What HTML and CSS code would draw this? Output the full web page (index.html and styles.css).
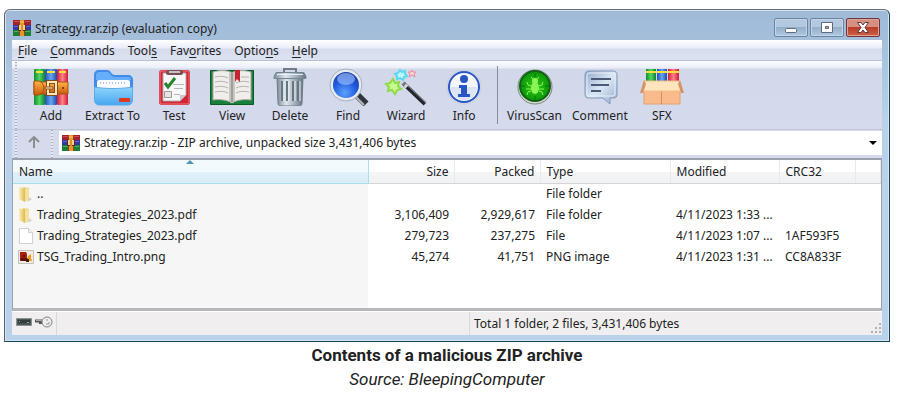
FILE: index.html
```html
<!DOCTYPE html>
<html lang="en">
<head>
	<meta charset="UTF-8">
	<title>Strategy.rar.zip</title>
	<link rel="stylesheet" href="styles.css">
</head>
<body>
	<svg class="defs" width="0" height="0" aria-hidden="true">
		<defs>
			<linearGradient id="gfolder" x1="0" y1="0" x2="0" y2="1"><stop offset="0" stop-color="#8fd6fb"/><stop offset="1" stop-color="#47a5f0"/></linearGradient>
			<linearGradient id="gyellow" x1="0" y1="0" x2="1" y2="0"><stop offset="0" stop-color="#fbf0b8"/><stop offset="1" stop-color="#dfb94c"/></linearGradient>
			<linearGradient id="gmetal" x1="0" y1="0" x2="1" y2="0"><stop offset="0" stop-color="#7d8b98"/><stop offset=".35" stop-color="#dde5eb"/><stop offset=".65" stop-color="#aab7c3"/><stop offset="1" stop-color="#66747f"/></linearGradient>
			<radialGradient id="gblue" cx=".45" cy=".8" r=".8"><stop offset="0" stop-color="#5ba3ff"/><stop offset=".6" stop-color="#1f57dc"/><stop offset="1" stop-color="#1a3ba5"/></radialGradient>
			<radialGradient id="ggreen"><stop offset="0" stop-color="#2fc813"/><stop offset="1" stop-color="#0a970a"/></radialGradient>
			<linearGradient id="gbubble" x1="0" y1="0" x2="1" y2="1"><stop offset="0" stop-color="#8fa8cc"/><stop offset=".5" stop-color="#dbe8f5"/><stop offset="1" stop-color="#93abcd"/></linearGradient>
			<linearGradient id="gg" x1="0" y1="0" x2="1" y2="0"><stop offset="0" stop-color="#158b34"/><stop offset=".5" stop-color="#4fd764"/><stop offset="1" stop-color="#12802f"/></linearGradient>
			<linearGradient id="gb" x1="0" y1="0" x2="1" y2="0"><stop offset="0" stop-color="#2050b5"/><stop offset=".5" stop-color="#69a5f3"/><stop offset="1" stop-color="#1c49aa"/></linearGradient>
			<linearGradient id="gr" x1="0" y1="0" x2="1" y2="0"><stop offset="0" stop-color="#d51b38"/><stop offset=".5" stop-color="#ff8288"/><stop offset="1" stop-color="#d01a38"/></linearGradient>
			<linearGradient id="gbelt" x1="0" y1="0" x2="0" y2="1"><stop offset="0" stop-color="#ffb648"/><stop offset="1" stop-color="#c9590a"/></linearGradient>
		</defs>
		<symbol id="rar" viewBox="0 0 18 16">
			<path fill="#a51f2c" d="M0 0h18v5H0z"/><path fill="#3438a0" d="M0 5h18v5H0z"/><path fill="#1c7e38" d="M0 10h18v6H0z"/>
			<path fill="#d0495d" d="M1 1h5v1H1zM12 1h5v1h-5z"/><path fill="#6268c8" d="M1 6h5v1H1zM12 6h5v1h-5z"/><path fill="#4fa95a" d="M1 11h5v1H1zM12 11h5v1h-5z"/>
			<path fill="#8b460f" d="M6 0h6v16H6z"/><path fill="#e8952e" d="M7 0h4v16H7z"/>
			<path fill="#5c2d12" d="M5 5h8v6H5z"/><path fill="#f2cf93" d="M6 5h2v5H6zM10 5h2v5h-2z"/><path fill="#e08a2a" d="M8 5h2v6H8z"/><path fill="#f5b250" d="M7 1h4v2H7z"/>
		</symbol>
		<symbol id="folder" viewBox="0 0 16 16">
			<path fill="#e9cf76" d="M5 1l6 1v11l-6 2z"/><path fill="url(#gyellow)" d="M1 1l6 2v13l-6-3z"/><path fill="#f2e1a0" d="M8 2l3 1v8l2 1v2l-6 2V4z"/><path fill="#c9d3dc" d="M11 12l3 1-1 1-3 1z"/>
		</symbol>
	</svg>
	<figure class="figure">
		<div class="window">
			<div class="titlebar">
				<svg class="smallicon"><use href="#rar"/></svg>
				<div class="title">Strategy.rar.zip (evaluation copy)</div>
				<div class="winbtns">
					<button class="winbtn" aria-label="Minimize"><svg width="14" height="14" viewBox="0 0 14 14"><rect x="1.5" y="7.500" width="11" height="4" rx="1" fill="#fff" stroke="#5f6b78"/></svg></button>
					<button class="winbtn" aria-label="Maximize"><svg width="14" height="14" viewBox="0 0 14 14"><path fill="#fff" fill-rule="evenodd" stroke="#5f6b78" d="M1.500 1.500h11v10h-11zM5.500 5.500h3v2h-3z"/></svg></button>
					<button class="winbtn close" aria-label="Close"><svg width="14" height="14" viewBox="0 0 14 14"><path fill="#fff" stroke="#5c3a3f" d="M1.500 1.500h3.500l2 2.500 2-2.500h3.500L9 6.500l3.500 5H9L7 9l-2 2.500H1.500L5 6.500z"/></svg></button>
				</div>
			</div>
			<nav class="menu">
				<button><u>F</u>ile</button>
				<button><u>C</u>ommands</button>
				<button>Tool<u>s</u></button>
				<button>Fav<u>o</u>rites</button>
				<button>Optio<u>n</u>s</button>
				<button><u>H</u>elp</button>
			</nav>
			<div class="toolbar">
				<div class="grip"></div>
				<button class="tool">
					<svg viewBox="0 0 44 38">
						<rect x="5" y="1" width="11" height="36" rx="1" fill="url(#gg)"/><rect x="16" y="1" width="12" height="36" rx="1" fill="url(#gb)"/><rect x="28" y="1" width="11" height="36" rx="1" fill="url(#gr)"/>
						<path fill="#ffe02e" d="M7 3h7v2H7zM18 3h8v2h-8zM30 3h7v2h-7z"/>
						<path fill="url(#gbelt)" stroke="#a85210" d="M5 14h34v12H5z"/><path fill="url(#gbelt)" stroke="#a34b09" d="M5 13h5c3 1 5 4 5 7s-2 6-5 7H5z"/>
						<path fill="none" stroke="#8b4a1c" stroke-width="4" d="M19 14h8v12h-8z"/><path fill="none" stroke="#ffe8b6" stroke-width="2" d="M19 14h8v12h-8z"/><path fill="#fff3d3" stroke="#985018" d="M16 19h8v2h-8z"/><circle cx="34" cy="20" r="1" fill="#6c2b05"/>
					</svg>
					<span>Add</span>
				</button>
				<button class="tool">
					<svg viewBox="0 0 44 38">
						<path fill="#3e8ceb" d="M3 7c0-3 2-5 5-5h8c4 0 4 5 8 5h13c3 0 5 2 5 5v19H3z"/><path fill="#67aef8" d="M5 7c0-2 1-3 3-3h8c3 0 4 5 8 5h13c2 0 3 1 3 3H5z"/>
						<rect x="6" y="12" width="33" height="16" rx="2" fill="#f8fbff"/><path stroke="#b7c2d1" stroke-width="2" stroke-dasharray="1 2" d="M9 15h27"/>
						<path fill="url(#gfolder)" stroke="#58aae9" d="M3.500 19c10 2 27 2 38 0v13c0 3-2 5-5 5h-28c-3 0-5-2-5-5z"/><rect x="28" y="30" width="11" height="4" rx="1" fill="#e0391f"/>
					</svg>
					<span>Extract To</span>
				</button>
				<button class="tool">
					<svg viewBox="0 0 44 38">
						<rect x="7" y="2" width="31" height="35" rx="3" fill="#d32635"/><rect x="8" y="3" width="29" height="33" rx="2" fill="none" stroke="#ef7680"/><path fill="#f8f7f7" stroke="#b3a9ab" d="M11 5h23v22l-6 6H11z"/><path fill="#cbc7c9" d="M34 27l-6 6v-6z"/>
						<rect x="14" y="2" width="17" height="5" rx="2" fill="#7b4e51"/><path fill="#c8c1c3" d="M17 3h11v2H17z"/><path fill="none" stroke="#258531" stroke-width="3" d="M13 15l3 4 7-9"/>
						<path fill="#e6e4e5" stroke="#9e9b9d" d="M12.500 23.500h7v6h-7z"/><path stroke="#b9b5b7" d="M21 16.500h11M22 20.500h9M22 26.500h6"/>
					</svg>
					<span>Test</span>
				</button>
				<button class="tool">
					<svg viewBox="0 0 44 38">
						<path fill="#19803b" stroke="#0c5a26" d="M.5 2.500h43v34H.5z"/><path fill="#efeeea" stroke="#aaa9a2" d="M3 4c7-2 15-2 19 1 4-3 12-3 19-1v28c-7-1-15 0-19 3-4-3-12-4-19-3z"/>
						<path fill="#c7c6bf" d="M19 4l3 1 3-1v29l-3 2-3-2z"/><path stroke="#777" d="M22 5v29"/>
						<path fill="none" stroke="#b4b4ae" d="M5 9c5-1 9-1 13 1M5 14c5-1 9-1 13 1M5 19c5-1 9-1 13 1M5 24c5-1 9-1 13 1M26 15c4-2 8-2 13-1M26 20c4-2 8-2 13-1M26 25c4-2 8-2 13-1M31 9h8"/>
						<path fill="#c82330" d="M25 2h5v12l-3-3-2 3z"/>
					</svg>
					<span>View</span>
				</button>
				<button class="tool">
					<svg viewBox="0 0 44 38">
						<path fill="none" stroke="#6f7b86" stroke-width="2" d="M16 5V1h12v4"/><path fill="url(#gmetal)" stroke="#6e7b87" d="M9 10h26l-1 25c0 2-1 3-3 3H13c-2 0-3-1-3-3z"/>
						<path stroke="#687682" stroke-width="2" d="M14 13v20M19 13v20M25 13v20M30 13v20"/><path stroke="#edf3f6" d="M16 13v20M21 13v20M27 13v20M32 13v20"/><path fill="url(#gmetal)" stroke="#768592" d="M8 4.500h28l2 4v2H6v-2z"/><path stroke="#e8eff4" d="M9 6.500h26"/>
					</svg>
					<span>Delete</span>
				</button>
				<button class="tool">
					<svg viewBox="0 0 44 38">
						<path stroke="#30343b" stroke-width="7" d="M30 26l10 10"/><path stroke="#b4bbc5" stroke-width="2" d="M30 29l8 8"/><circle cx="20" cy="17" r="16" fill="#e6ebf1" stroke="#a4afbd"/><circle cx="20" cy="17" r="13" fill="url(#gblue)"/><ellipse cx="20" cy="11" rx="9" ry="6" fill="#a7c8ff" opacity=".6"/>
					</svg>
					<span>Find</span>
				</button>
				<button class="tool">
					<svg viewBox="0 0 44 38">
						<path stroke="#22262c" stroke-width="4" d="M20 16l21 20"/><path stroke="#8e969e" stroke-width="1" d="M22 16l20 19"/><path stroke="#d4d8dc" stroke-width="4" d="M20 16l3 3"/><path stroke="#777" stroke-width="4" d="M19 15l2 2"/>
						<path fill="#c6fa91" stroke="#8edb45" stroke-width="2" d="M9 11l2 4 4-1-1 4 3 3-4 1-2 4-3-4-4 1 1-4-3-3 4-1z"/><path fill="#bafaff" stroke="#5fd8ee" stroke-width="2" d="M16 2l2 2 3-1v3l2 2-3 1-1 3-3-2-3 1v-3l-2-2 3-1z"/><path fill="#fcd1d6" stroke="#ec8c99" d="M28 2l1 2h3l-2 2 1 3-3-2-3 2 1-3-2-2h3z"/>
					</svg>
					<span>Wizard</span>
				</button>
				<button class="tool">
					<svg viewBox="0 0 44 38">
						<circle cx="22" cy="19" r="17" fill="#e4e9f0" stroke="#c6cdd7"/><circle cx="22" cy="19" r="15" fill="#f4f7fb" stroke="#2855c3" stroke-width="2"/><path fill="#dce5f5" d="M9 19a13 13 0 0 0 26 0z"/><circle cx="22" cy="11" r="4" fill="#2857c4"/><path fill="#2857c4" d="M17 17h8v9h3v3H16v-3h3v-6h-2z"/>
					</svg>
					<span>Info</span>
				</button>
				<div class="separator"></div>
				<button class="tool">
					<svg viewBox="0 0 44 38">
						<circle cx="22" cy="19" r="17" fill="#d7ddd8" stroke="#738577"/><circle cx="22" cy="18" r="15" fill="url(#ggreen)" stroke="#145f18" stroke-width="2"/><path stroke="#077009" d="M22 5v4M22 28v4M8 18h4M32 18h4"/>
						<ellipse cx="22" cy="20" rx="4" ry="6" fill="#8bf556"/><circle cx="22" cy="13" r="3" fill="#8bf556"/><path fill="none" stroke="#8bf556" d="M18 18l-3-1-1-3M18 21h-5M18 23l-3 1-1 3M26 18l3-1 1-3M26 21h5M26 23l3 1 1 3M20 11l-2-2M24 11l2-2"/>
					</svg>
					<span>VirusScan</span>
				</button>
				<button class="tool">
					<svg viewBox="0 0 44 38">
						<path fill="url(#gbubble)" stroke="#8197b9" d="M11 3h24c3 0 4 2 4 4v19c0 3-1 4-4 4h-3v6l-7-6H11c-3 0-4-1-4-4V7c0-2 1-4 4-4z"/><path fill="none" stroke="#e7f0fb" d="M10 5h25l2 2v20l-2 1H10l-1-1V7z"/><path stroke="#4b5b76" stroke-width="2" d="M13 11h20M13 17h18M13 23h10"/>
					</svg>
					<span>Comment</span>
				</button>
				<button class="tool">
					<svg viewBox="0 0 44 38">
						<path fill="url(#gg)" d="M6 1h10v15H6z"/><path fill="url(#gb)" d="M17 1h10v15H17z"/><path fill="url(#gr)" d="M28 1h11v15H28z"/><path fill="#ffdd34" d="M6 3h10v2H6zM17 3h10v2H17zM28 3h11v2H28z"/>
						<path fill="#f9bb8c" stroke="#e5a070" d="M4 20h36v16H4z"/><path fill="#d98b60" d="M21 23h1v13h-1z"/><path fill="#ffe4bd" stroke="#efbf8b" d="M4 13h36l2 10H2z"/><path fill="#d49468" d="M4 12L0 25h3l3-9zM40 12l4 13h-3l-3-9z"/>
					</svg>
					<span>SFX</span>
				</button>
			</div>
			<div class="address">
				<div class="grip"></div>
				<button class="up" aria-label="Up one level"><svg width="14" height="12" viewBox="0 0 14 12"><path fill="none" stroke="#8b8d94" stroke-width="2" d="M7 12V2M2 6l5-5 5 5"/></svg></button>
				<div class="grip"></div>
				<div class="path">
					<svg class="smallicon"><use href="#rar"/></svg>
					<select class="pathselect" aria-label="Path">
						<option>Strategy.rar.zip - ZIP archive, unpacked size 3,431,406 bytes</option>
					</select>
					<svg class="arrow" width="8" height="4" viewBox="0 0 8 4"><path d="M0 0h8L4 4z"/></svg>
				</div>
			</div>
			<div class="list">
				<table class="files">
					<thead>
						<tr>
							<th class="name">Name<svg class="sort" width="8" height="4" viewBox="0 0 8 4"><path fill="#4d95b5" d="M4 0l4 4H0z"/></svg></th>
							<th class="size num">Size</th>
							<th class="packed num">Packed</th>
							<th class="type">Type</th>
							<th class="modified">Modified</th>
							<th class="crc">CRC32</th>
							<th></th>
						</tr>
					</thead>
					<tbody>
						<tr><td class="name"><svg class="fileicon"><use href="#folder"/></svg>..</td><td></td><td></td><td>File folder</td><td></td><td></td><td></td></tr>
						<tr><td class="name"><svg class="fileicon"><use href="#folder"/></svg>Trading_Strategies_2023.pdf</td><td class="num">3,106,409</td><td class="num">2,929,617</td><td>File folder</td><td>4/11/2023 1:33 ...</td><td></td><td></td></tr>
						<tr><td class="name"><svg class="fileicon" viewBox="0 0 16 16"><path fill="#fff" stroke="#d0d0d0" d="M1.500.500h9l4 4v11h-13z"/><path fill="#f2f2f2" stroke="#d0d0d0" d="M10.500.500v4h4"/></svg>Trading_Strategies_2023.pdf</td><td class="num">279,723</td><td class="num">237,275</td><td>File</td><td>4/11/2023 1:07 ...</td><td>1AF593F5</td><td></td></tr>
						<tr><td class="name"><svg class="fileicon" viewBox="0 0 16 16"><path fill="#f3ece3" stroke="#c5c0ba" d="M.5 1.500h15v13H.5z"/><path fill="#a81f0c" d="M2 3h6l1 2v5l-2 2H2z"/><path fill="#5b1008" d="M3 9h7v3H3zM5 6h2v2H5z"/><path fill="#ed9e1f" d="M10 7l3-2v4l1 3h-3l-2-1z"/><path fill="#40200d" d="M8 10h3v3H8z"/></svg>TSG_Trading_Intro.png</td><td class="num">45,274</td><td class="num">41,751</td><td>PNG image</td><td>4/11/2023 1:31 ...</td><td>CC8A833F</td><td></td></tr>
						<tr class="rest"><td class="name"></td><td></td><td></td><td></td><td></td><td></td><td></td></tr>
					</tbody>
				</table>
			</div>
			<div class="status">
				<div class="statusicons">
					<svg width="16" height="8" viewBox="0 0 16 8"><path fill="#4b5555" stroke="#8a9292" d="M.5.500h15v7H.5z"/><path fill="#343c3c" d="M2 2h12v3H2z"/><path fill="#8fa39c" d="M3 3h1v1H3zM11 4h2v1h-2z"/></svg>
					<svg width="18" height="12" viewBox="0 0 18 12"><path stroke="#555" stroke-width="3" d="M0 5h7"/><path stroke="#a8a8a8" d="M1 4.500h8"/><path stroke="#555" stroke-width="2" d="M4 7h4"/><circle cx="12" cy="6" r="5" fill="#eee" stroke="#858585"/><path fill="none" stroke="#999" d="M11 4h2M11 8h3v-2"/></svg>
				</div>
				<div class="statuscell"></div>
				<div class="statuscell">Total 1 folder, 2 files, 3,431,406 bytes</div>
				<svg class="resize" width="10" height="10" viewBox="0 0 10 10"><path fill="#b3afaf" d="M8 0h2v2H8zM4 4h2v2H4zM8 4h2v2H8zM0 8h2v2H0zM4 8h2v2H4zM8 8h2v2H8z"/></svg>
			</div>
		</div>
		<figcaption class="caption"><strong>Contents of a malicious ZIP archive</strong><em>Source: BleepingComputer</em></figcaption>
	</figure>
</body>
</html>
```

FILE: styles.css
```css
*{
	box-sizing: border-box;
	margin: 0;
	padding: 0;
}
body{
	background-color: #fff;
	color: #222;
	font-family: "Noto Sans", "Segoe UI", sans-serif;
	font-size: 12px;
	line-height: 16px;
}
button, select{
	border: none;
	background: none;
	color: inherit;
	font: inherit;
}
svg{
	display: block;
	flex: none;
}
.defs{
	position: absolute;
}
.figure{
	padding: 9px 18px 0 4px;
}
.window{
	border: 1px solid #174654;
	border-top-color: #667078;
	border-left-color: #566270;
	border-radius: 6px 6px 0 0;
	background: linear-gradient(#9fbad7, #a5bfdb 30px, #b9d1ea 110px);
	box-shadow: inset 0 0 0 1px #d5e3f2;
	padding: 0 7px 6px;
}
.titlebar{
	display: flex;
	height: 30px;
	padding: 0 2px 0 1px;
}
.smallicon{
	width: 18px;
	height: 16px;
}
.titlebar .smallicon{
	margin-top: 10px;
}
.title{
	flex: 1;
	padding: 11px 0 0 4px;
}
.winbtns{
	display: flex;
	gap: 2px;
	padding-top: 8px;
}
.winbtn{
	display: flex;
	align-items: center;
	justify-content: center;
	width: 34px;
	height: 19px;
	border: 1px solid #6d84a0;
	border-radius: 2px;
	box-shadow: inset 0 0 0 1px #c3d5e8;
	background: linear-gradient(#b4c9df 50%, #93afcb 50%, #b1c9e2);
}
.close{
	border-color: #6e3440;
	box-shadow: inset 0 0 0 1px #dea398;
	background: linear-gradient(#d68f80 45%, #b93c27 50%, #cf6046);
}
.menu{
	display: flex;
	gap: 13px;
	height: 21px;
	padding: 2px 6px 0;
	border-bottom: 1px solid #b9c0d2;
	background: linear-gradient(#fff, #e9edf7 40%, #d5dcec 45%, #dce2f1);
}
.menu u{
	text-underline-offset: 2px;
}
.toolbar{
	display: flex;
	height: 69px;
	padding: 1px 3px 0;
	border-bottom: 1px solid #c0c6d8;
	background: linear-gradient(#fcfdff, #e9edf7 7px, #d1d8ea 8px, #d5dbed);
}
.grip{
	width: 2px;
	background: repeating-linear-gradient(#a9afbf 0 1px, #e6eaf4 1px 3px);
}
.toolbar .grip{
	margin-right: 5px;
}
.tool{
	display: flex;
	flex-direction: column;
	align-items: center;
	gap: 2px;
	min-width: 58px;
	padding: 6px 5px 0;
}
.tool svg{
	width: 44px;
	height: 38px;
}
.separator{
	width: 1px;
	height: 58px;
	margin: 4px 4px 0;
	background-color: #858c9d;
}
.address{
	display: flex;
	height: 28px;
	padding-left: 3px;
	background-color: #d5dbed;
}
.up{
	display: flex;
	align-items: center;
	justify-content: center;
	width: 34px;
	padding-bottom: 4px;
}
.path{
	display: flex;
	flex: 1;
	align-items: center;
	height: 24px;
	margin: 1px 0 0 6px;
	padding: 0 5px 0 3px;
	background-color: #fff;
}
.pathselect{
	flex: 1;
	appearance: none;
	padding-left: 4px;
	outline: none;
}
.list{
	border: 2px solid #9ca2ad;
	border-width: 2px 1px 3px;
	border-bottom-color: #b7b6bb;
	background-color: #fff;
}
.files{
	width: 100%;
	table-layout: fixed;
	border-collapse: collapse;
}
.files th{
	height: 23px;
	padding: 2px 5px 0 6px;
	border-right: 1px solid #e8ebee;
	border-bottom: 1px solid #d5d5d5;
	background: linear-gradient(#fff 50%, #f3f4f6 55%, #f1f2f4);
	font-weight: normal;
	text-align: left;
}
.files td{
	height: 21px;
	padding: 0 0 0 6px;
	white-space: nowrap;
}
.files .num{
	padding-right: 5px;
	text-align: right;
}
.files th.name{
	position: relative;
	width: 355px;
	border-color: #a9deed;
	background: linear-gradient(#f2fafd 50%, #dff1fa 55%, #d8edf6);
}
.files td.name{
	padding-left: 5px;
	background-color: #f6f6f6;
}
.sort{
	position: absolute;
	top: 0;
	left: 50%;
	margin-left: -4px;
}
.size, .packed{
	width: 86px;
}
.type{
	width: 130px;
}
.modified{
	width: 109px;
}
.crc{
	width: 76px;
}
.fileicon{
	display: inline-block;
	width: 16px;
	height: 16px;
	margin-right: 3px;
	vertical-align: text-bottom;
}
.files .rest td{
	height: 41px;
}
.status{
	display: flex;
	position: relative;
	height: 24px;
	border-top: 1px solid #fff;
	background-color: #f0eeee;
}
.statusicons{
	display: flex;
	align-items: center;
	gap: 3px;
	width: 45px;
	padding: 0 0 4px 4px;
	border-right: 1px solid #dcd9d9;
}
.statuscell{
	flex: 1;
	padding: 4px 4px 0;
}
.statuscell + .statuscell{
	border-left: 1px solid #dcd9d9;
}
.resize{
	position: absolute;
	right: 1px;
	bottom: 2px;
}
.caption{
	display: flex;
	flex-direction: column;
	align-items: center;
	padding-top: 1px;
	font-family: Roboto, sans-serif;
	font-size: 17px;
	line-height: 24px;
}
```
